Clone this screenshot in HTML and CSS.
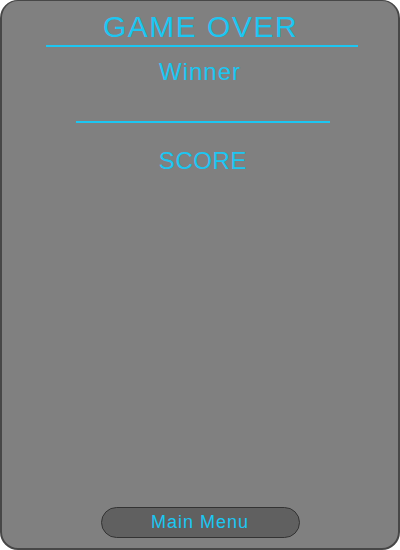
FILE: index.html
```html
<!DOCTYPE html>
<html lang="en">
<head>
<meta charset="utf-8">
<title>Game Over</title>
<link rel="stylesheet" href="styles.css">
</head>
<body>
<div class="panel">
  <div class="title">GAME OVER</div>
  <div class="rule rule-wide"></div>
  <div class="winner">Winner</div>
  <div class="rule rule-mid"></div>
  <div class="score">SCORE</div>
  <button class="menu-btn" type="button">Main Menu</button>
</div>
</body>
</html>
```
FILE: styles.css
```css
html, body {
  margin: 0;
  padding: 0;
  background: #ffffff;
}

.panel {
  box-sizing: border-box;
  width: 400px;
  height: 550px;
  background: #808080;
  border-style: solid;
  border-color: #474747;
  border-width: 1px 2px 2px 2px;
  border-radius: 18px;
  display: flex;
  flex-direction: column;
  align-items: center;
  padding-top: 9px;
  font-family: "Liberation Sans", Arial, sans-serif;
  color: #1cc6f2;
}

.title {
  font-size: 30px;
  line-height: 34px;
  letter-spacing: 1.5px;
  margin-left: 1px;
}

.rule {
  height: 2px;
  background: #1cc6f2;
}

.rule-wide {
  width: 312px;
  margin-top: 1px;
  margin-left: 3px;
}

.winner {
  font-size: 24px;
  line-height: 28px;
  letter-spacing: 1px;
  margin-top: 11px;
}

.rule-mid {
  width: 254px;
  margin-top: 35px;
  margin-left: 5px;
}

.score {
  font-size: 24px;
  line-height: 28px;
  letter-spacing: 0.6px;
  margin-top: 24px;
  margin-left: 6px;
}

.menu-btn {
  margin-top: auto;
  margin-bottom: 10px;
  margin-left: 0;
  box-sizing: border-box;
  width: 199px;
  height: 31px;
  padding: 0;
  border: 1px solid #333333;
  border-radius: 16px;
  background: #606060;
  color: #1cc6f2;
  font-family: "Liberation Sans", Arial, sans-serif;
  font-size: 18px;
  line-height: 21px;
  letter-spacing: 1px;
}
```
